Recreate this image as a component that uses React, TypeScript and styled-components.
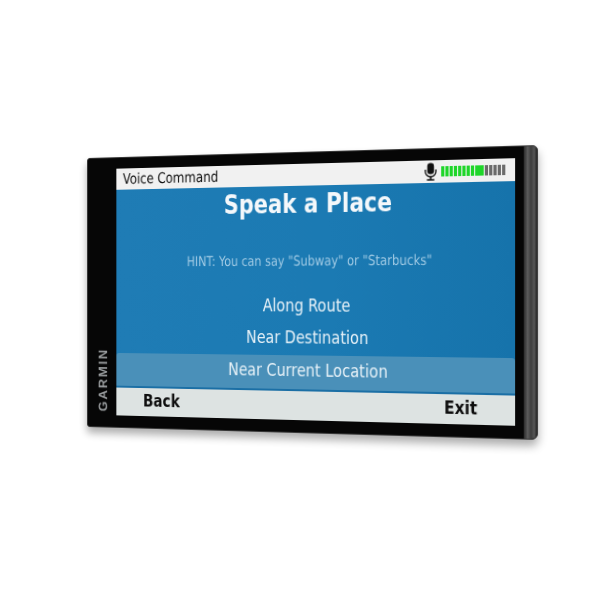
import * as React from "react";
import styled, { createGlobalStyle } from "styled-components";

type Point = [number, number];

// flat size of the unit before it gets tilted
const FLAT_W = 451;
const FLAT_H = 282;

// where the four corners of the unit land in the picture
const CORNERS: Point[] = [
  [87, 158],
  [538, 145],
  [538, 440],
  [87, 427],
];

// homography from the flat rect to the corners, written as a css matrix3d
const toMatrix = (w: number, h: number, q: Point[]) => {
  const [[x0, y0], [x1, y1], [x2, y2], [x3, y3]] = q;
  const dx1 = x1 - x2;
  const dx2 = x3 - x2;
  const dx3 = x0 - x1 + x2 - x3;
  const dy1 = y1 - y2;
  const dy2 = y3 - y2;
  const dy3 = y0 - y1 + y2 - y3;
  const det = dx1 * dy2 - dx2 * dy1;
  const g = (dx3 * dy2 - dx2 * dy3) / det;
  const k = (dx1 * dy3 - dx3 * dy1) / det;
  const a = x1 - x0 + g * x1;
  const b = x3 - x0 + k * x3;
  const d = y1 - y0 + g * y1;
  const e = y3 - y0 + k * y3;
  return `matrix3d(${a / w},${d / w},0,${g / w},${b / h},${e / h},0,${k / h},0,0,1,0,${x0},${y0},0,1)`;
};

const GlobalStyle = createGlobalStyle`
  html, body {
    margin: 0;
    background: #fff;
  }
`;

const Page = styled.div`
  width: 600px;
  height: 600px;
  overflow: hidden;
  background: #fff;
`;

const Unit = styled.div`
  width: ${FLAT_W}px;
  height: ${FLAT_H}px;
  display: flex;
  transform-origin: 0 0;
  transform: ${toMatrix(FLAT_W, FLAT_H, CORNERS)};
  background: #060606;
  border-radius: 3px 5px 6px 3px;
  border: 1px solid #3a3a3a;
  box-sizing: border-box;
  box-shadow: 0 6px 8px rgba(0, 0, 0, 0.32);
  font-family: "DejaVu Sans", sans-serif;
`;

const LeftBezel = styled.div`
  width: 31px;
  flex: none;
  display: flex;
  flex-direction: column;
  justify-content: flex-end;
  align-items: center;
  padding: 0 0 16px 2px;
  box-sizing: border-box;
`;

const Logo = styled.span`
  writing-mode: vertical-rl;
  transform: rotate(180deg);
  font-family: "Liberation Sans", sans-serif;
  font-size: 13.5px;
  font-weight: 700;
  letter-spacing: 1.9px;
  color: #9a9d9f;
`;

const Screen = styled.div`
  width: 398px;
  flex: none;
  margin: 10.5px 0 12px;
  display: flex;
  flex-direction: column;
`;

const RightBezel = styled.div`
  width: 8px;
  flex: none;
`;

const SideEdge = styled.div`
  flex: 1;
  border-radius: 0 4px 5px 0;
  background: linear-gradient(
    90deg,
    #2a2a2a 0%,
    #5c5c5c 30%,
    #3c3c3c 55%,
    #565656 80%,
    #222 100%
  );
`;

const StatusBar = styled.div`
  height: 22px;
  flex: none;
  display: flex;
  align-items: center;
  justify-content: space-between;
  padding: 0 9px 0 7px;
  background: #f1f1f1;
`;

const StatusTitle = styled.span`
  font-size: 15px;
  color: #111;
  transform: scaleX(0.83);
  transform-origin: 0 50%;
`;

const MicLevel = styled.div`
  display: flex;
  align-items: center;
  gap: 3.5px;
`;

const Level = styled.div`
  display: flex;
  gap: 0.9px;
`;

const LevelBar = styled.i<{ $on: boolean }>`
  display: block;
  width: 3.2px;
  height: 10px;
  background: ${(p) => (p.$on ? "#1fd62a" : "#6b6b6b")};
`;

const Panel = styled.div`
  flex: 1;
  display: flex;
  flex-direction: column;
  align-items: center;
  padding-right: 3px;
  background: linear-gradient(90deg, #1f7cb5 0%, #1b7ab3 55%, #1673ab 100%);
`;

const Heading = styled.h1`
  margin: 2px 0 0;
  font-size: 27px;
  line-height: 32px;
  font-weight: 700;
  color: #f4f8fb;
  transform: scaleX(0.795);
`;

const Hint = styled.p`
  margin: 32px 0 0;
  font-size: 14px;
  line-height: 18px;
  color: #a5cde6;
  transform: scaleX(0.813);
`;

const Options = styled.ul`
  list-style: none;
  margin: auto -3px 0 0;
  padding: 0;
  align-self: stretch;
`;

const Option = styled.li<{ $selected?: boolean }>`
  height: ${(p) => (p.$selected ? 36 : 32)}px;
  display: flex;
  align-items: center;
  justify-content: center;
  padding: 0 2px 4px 0;
  color: #e8f2f8;
  background: ${(p) => (p.$selected ? "#4a90b9" : "transparent")};
  border-radius: ${(p) => (p.$selected ? "3px 3px 0 0" : "0")};
  border-bottom: ${(p) => (p.$selected ? "2px solid #1b6fa5" : "none")};
  box-sizing: border-box;
`;

const OptionLabel = styled.span`
  font-size: 18px;
  transform: scaleX(0.805);
`;

const SoftKeys = styled.div`
  height: 29.5px;
  flex: none;
  display: flex;
  justify-content: space-between;
  align-items: center;
  padding: 0 31px 3px 24px;
  box-sizing: border-box;
  background: #dde3e2;
`;

const SoftKey = styled.button`
  all: unset;
  font-family: inherit;
  font-size: 18px;
  font-weight: 700;
  color: #0d0d0d;
  transform: scaleX(0.805);
`;

const MicIcon = () => (
  <svg width="12" height="18" viewBox="0 0 12 18" aria-hidden="true">
    <rect x="2.8" y="0.5" width="6.4" height="11" rx="3.2" fill="#111" />
    <path d="M1 7v2a5 5 0 0 0 10 0V7" fill="none" stroke="#111" strokeWidth="1.3" />
    <path d="M6 14v2.5M2.5 17h7" fill="none" stroke="#111" strokeWidth="1.5" />
  </svg>
);

const LEVELS = Array.from({ length: 15 }, (_, i) => i < 10);

export default function App() {
  return (
    <Page>
      <GlobalStyle />
      <Unit>
        <LeftBezel>
          <Logo>GARMIN</Logo>
        </LeftBezel>
        <Screen>
          <StatusBar>
            <StatusTitle>Voice Command</StatusTitle>
            <MicLevel>
              <MicIcon />
              <Level>
                {LEVELS.map((on, i) => (
                  <LevelBar key={i} $on={on} />
                ))}
              </Level>
            </MicLevel>
          </StatusBar>
          <Panel>
            <Heading>Speak a Place</Heading>
            <Hint>HINT: You can say "Subway" or "Starbucks"</Hint>
            <Options>
              <Option><OptionLabel>Along Route</OptionLabel></Option>
              <Option><OptionLabel>Near Destination</OptionLabel></Option>
              <Option $selected><OptionLabel>Near Current Location</OptionLabel></Option>
            </Options>
          </Panel>
          <SoftKeys>
            <SoftKey>Back</SoftKey>
            <SoftKey>Exit</SoftKey>
          </SoftKeys>
        </Screen>
        <RightBezel />
        <SideEdge />
      </Unit>
    </Page>
  );
}
